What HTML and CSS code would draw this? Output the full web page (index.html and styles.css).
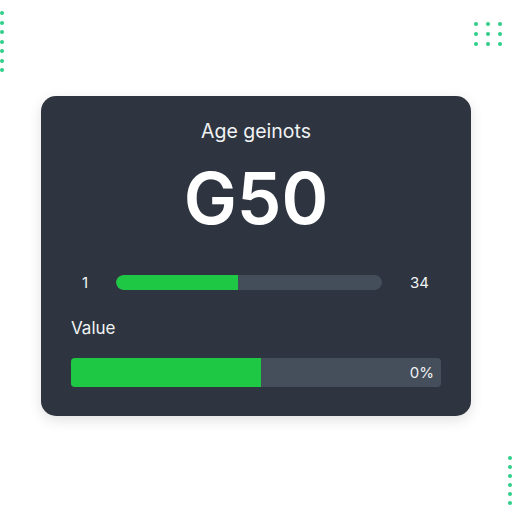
FILE: index.html
```html
<!DOCTYPE html>
<html>
<head>
<meta charset="utf-8">
<link rel="stylesheet" href="styles.css">
</head>
<body>
<div class="dots dots-left">
  <span></span><span></span><span></span><span></span><span></span><span></span><span></span>
</div>
<div class="dots dots-grid">
  <span></span><span></span><span></span><span></span><span></span><span></span><span></span><span></span><span></span>
</div>
<div class="dots dots-bottom">
  <span></span><span></span><span></span><span></span><span></span><span></span>
</div>
<main class="card">
  <div class="title">Age geinots</div>
  <div class="big">G50</div>
  <div class="slider-row">
    <span class="lbl lbl-min">1</span>
    <div class="track"><div class="fill" style="width:46%"></div></div>
    <span class="lbl lbl-max">34</span>
  </div>
  <div class="value-label">Value</div>
  <div class="bar">
    <div class="bar-fill" style="width:51.4%"></div>
    <span class="bar-text">0%</span>
  </div>
</main>
</body>
</html>
```
FILE: styles.css
```css
html, body { margin: 0; padding: 0; }
body {
  width: 512px; height: 512px; overflow: hidden;
  background: #ffffff;
  font-family: Inter, "Liberation Sans", sans-serif;
  position: relative;
}
.card {
  margin: 96px 0 0 41px;
  width: 430px; height: 320px;
  box-sizing: border-box;
  background: #2e3540;
  border-radius: 15px;
  box-shadow: 0 4px 14px rgba(0,0,0,0.12);
  padding: 22px 30px 0 30px;
  color: #fff;
}
.title {
  text-align: center;
  font-size: 19.5px;
  color: #f0f2f4;
  line-height: 26px;
}
.big {
  text-align: center;
  font-size: 71px;
  font-weight: 600;
  line-height: 70px;
  margin-top: 19px;
  letter-spacing: 0px;
}
.slider-row {
  display: flex; align-items: center;
  margin-top: 41px;
  height: 16px;
}
.lbl { font-size: 15px; color: #f2f4f6; }
.lbl-min { width: 45px; padding-left: 11px; box-sizing: border-box; }
.lbl-max { padding-left: 28px; }
.track {
  width: 266px; height: 15px;
  background: #444e5a;
  border-radius: 8px;
  overflow: hidden;
}
.fill { height: 100%; background: #1ec744; border-radius: 8px 0 0 8px; }
.value-label {
  font-size: 17px; color: #f0f2f4;
  margin-top: 27px;
  line-height: 22px;
}
.bar {
  position: relative;
  margin-top: 19px;
  width: 370px; height: 29px;
  background: #454f5b;
  border-radius: 4px;
  overflow: hidden;
  display: flex; align-items: center; justify-content: flex-end;
}
.bar-fill { position: absolute; left: 0; top: 0; bottom: 0; background: #1ec744; }
.bar-text { position: relative; font-size: 15px; color: #f0f2f4; padding-right: 7px; }
.dots { position: absolute; }
.dots span { display: block; width: 4px; height: 4px; border-radius: 50%; background: #2fcf8a; }
.dots-left { left: 0; top: 11px; display: flex; flex-direction: column; gap: 5.5px; }
.dots-grid { left: 474px; top: 22px; display: grid; grid-template-columns: repeat(3, 4px); column-gap: 8px; row-gap: 6px; }
.dots-bottom { left: 508px; top: 456px; display: flex; flex-direction: column; gap: 5px; }
```
